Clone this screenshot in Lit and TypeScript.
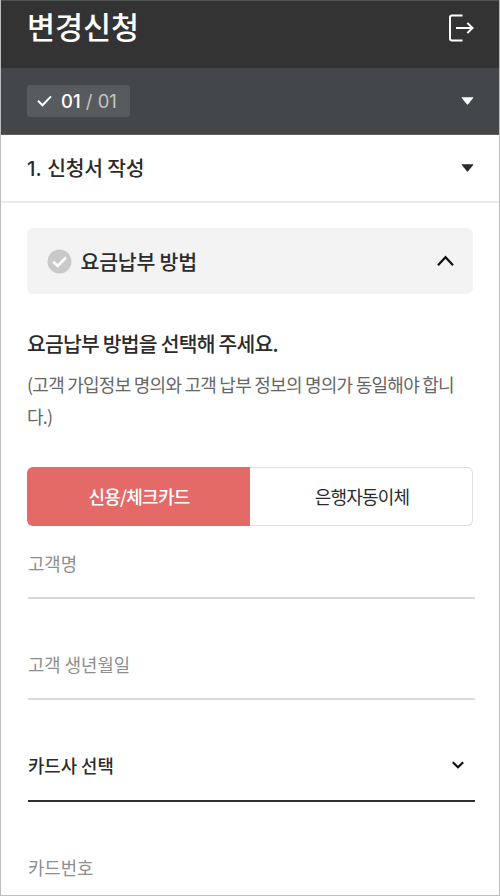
import { LitElement, html, css } from "lit";
import { customElement, property } from "lit/decorators.js";

@customElement("form-field")
class FormField extends LitElement {
  @property() label = "";
  @property({ type: Boolean }) select = false;

  static styles = css`
    :host { display: block; }
    .field {
      box-sizing: border-box;
      height: 72px;
      display: flex;
      align-items: center;
      justify-content: space-between;
      padding: 2px 10px 0 0;
      border-bottom: 2px solid #d9d9d9;
      color: #8e8e8e;
      font-size: 17.8px;
    }
    .select { color: #2b2b2b; font-weight: 500; border-bottom-color: #2e312f; padding-top: 0; }
    svg { display: block; }
  `;

  render() {
    return html`<div class="field ${this.select ? "select" : ""}">
      <span>${this.label}</span>
      ${this.select
        ? html`<svg width="14" height="10" viewBox="0 0 14 10" fill="none" stroke="#111" stroke-width="2.200">
            <path d="M1.800 2.200 7 7.300 12.200 2.200" />
          </svg>`
        : ""}
    </div>`;
  }
}

@customElement("app-root")
class AppRoot extends LitElement {
  static styles = css`
    :host {
      display: block;
      box-sizing: border-box;
      height: 896px;
      overflow: hidden;
      background: #fff;
      border: 1px solid #bdbdbd;
      border-top: 0;
      color: #2b2b2b;
      font-family: "Noto Sans CJK KR", sans-serif;
    }
    svg { display: block; }
    header, .progress, .section {
      box-sizing: border-box;
      display: flex;
      align-items: center;
      justify-content: space-between;
      padding: 0 25px 0 26px;
      margin: 0 -1px;
      border: solid transparent;
      border-width: 0 1px;
    }
    header {
      height: 68px;
      padding-bottom: 14px;
      background: #333;
      border-color: #4a4a4a;
      border-top: 1px solid #505252;
      color: #fff;
    }
    h1 { margin: 0; padding-bottom: 4px; font-size: 30.5px; font-weight: 500; line-height: 40px; letter-spacing: -0.1px; }
    .progress {
      height: 67px;
      background: #434749;
      border-color: #5c6062;
      border-bottom: 1px solid #5c6062;
    }
    .badge {
      box-sizing: border-box;
      width: 103px;
      height: 32px;
      display: flex;
      align-items: center;
      padding-left: 10px;
      border-radius: 3px;
      background: #575b5d;
      color: #fff;
      font-family: "Inter", "Noto Sans CJK KR", sans-serif;
      font-size: 18.5px;
      letter-spacing: 0;
    }
    .badge svg { margin-right: 9px; }
    .now { font-weight: 500; }
    .total { color: #c2c5c6; white-space: pre; }
    .section {
      height: 67px;
      padding-bottom: 1px;
      border-color: #bdbdbd;
      font-size: 20.4px;
      letter-spacing: -0.2px;
      font-weight: 500;
    }
    .section span { padding-bottom: 2px; white-space: pre; }
    .section .num { font-family: "Inter", sans-serif; padding: 0; letter-spacing: 0.1px; }
    .divider { height: 2px; background: #ebebeb; margin-top: -1px; }
    main { padding: 25px 26px 0 26px; }
    .panel {
      height: 66px;
      display: flex;
      align-items: center;
      padding: 0 19px 0 20px;
      border-radius: 6px;
      background: #f3f3f3;
      font-size: 20.5px;
      letter-spacing: -0.2px;
      font-weight: 500;
    }
    .panel span { flex: 1; margin-left: 8.5px; padding-bottom: 1px; }
    h2 { margin: 34px 0 0; font-size: 20.4px; line-height: 30px; font-weight: 500; letter-spacing: -0.76px; white-space: nowrap; }
    p {
      margin: 10px -3px 0 0;
      color: #666;
      font-size: 18px;
      letter-spacing: -0.75px;
      line-height: 32px;
      word-break: break-all;
    }
    .tabs {
      display: grid;
      grid-template-columns: 1fr 1fr;
      height: 59px;
      margin-top: 35px;
      font-size: 18px;
      letter-spacing: -0.75px;
    }
    .tab { box-sizing: border-box; display: flex; align-items: center; justify-content: center; padding: 0 0 2px 1px; }
    .active { border-radius: 6px 0 0 6px; background: #e36a66; color: #fff; font-weight: 500; }
    .idle { border: 1px solid #dfdfdf; border-left: 0; border-radius: 0 6px 6px 0; padding-left: 2px; letter-spacing: -0.85px; }
    .fields { display: grid; gap: 29.3px; margin: 1px -1.5px 0 1px; }
  `;

  render() {
    const triangle = (color: string) => html`<svg width="13" height="8" viewBox="0 0 13 8" fill=${color}>
      <path d="M1 .3H12Q12.7 .3 12.2 1L7.1 7.3Q6.5 8 5.9 7.3L.8 1Q.3 .3 1 .3Z" />
    </svg>`;
    return html`
      <header>
        <h1>변경신청</h1>
        <svg width="26" height="28" viewBox="0 0 26 28" fill="none" stroke="#fff" stroke-width="2">
          <path d="M14.500 1.500H4Q2 1.500 2 3.500V24.500Q2 26.500 4 26.500H14.500M8 14H24.500M19.300 8.900 24.500 14 19.300 19.100" />
        </svg>
      </header>
      <div class="progress">
        <div class="badge">
          <svg width="15" height="12" viewBox="0 0 15 12" fill="none" stroke="#fff" stroke-width="2">
            <path d="M1 5.700 5.500 10.200 14 1.400" />
          </svg>
          <span class="now">01</span><span class="total"> / 01</span>
        </div>
        ${triangle("#fff")}
      </div>
      <div class="section"><span><span class="num">1. </span>신청서 작성</span>${triangle("#2b2b2b")}</div>
      <div class="divider"></div>
      <main>
        <div class="panel">
          <svg width="25" height="25" viewBox="0 0 25 25" fill="none">
            <circle cx="12.500" cy="12.500" r="12" fill="#c9c9c9" />
            <path d="M6.200 12.700 10.700 17 19 8.500" stroke="#fff" stroke-width="2.600" />
          </svg>
          <span>요금납부 방법</span>
          <svg width="17" height="12" viewBox="0 0 17 12" fill="none" stroke="#111" stroke-width="2.200">
            <path d="M1 10.200 8.500 2.200 16 10.200" />
          </svg>
        </div>
        <h2>요금납부 방법을 선택해 주세요.</h2>
        <p>(고객 가입정보 명의와 고객 납부 정보의 명의가 동일해야 합니다.)</p>
        <div class="tabs">
          <div class="tab active">신용/체크카드</div>
          <div class="tab idle">은행자동이체</div>
        </div>
        <div class="fields">
          <form-field label="고객명"></form-field>
          <form-field label="고객 생년월일"></form-field>
          <form-field label="카드사 선택" select></form-field>
          <form-field label="카드번호"></form-field>
        </div>
      </main>
    `;
  }
}
